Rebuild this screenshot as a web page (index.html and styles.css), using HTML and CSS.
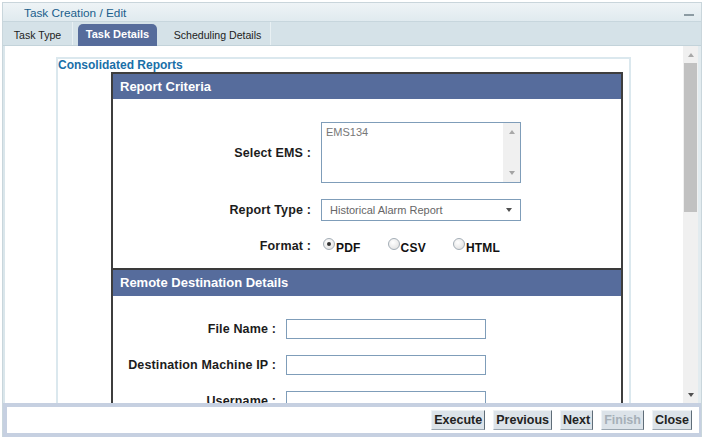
FILE: index.html
```html
<!DOCTYPE html>
<html>
<head>
<meta charset="utf-8">
<title>Task Creation / Edit</title>
<link rel="stylesheet" href="styles.css">
</head>
<body>
<div class="window">
  <div class="titlebar">
    <span class="title">Task Creation / Edit</span>
    <span class="minimize"></span>
  </div>
  <div class="tabs">
    <div class="tab tab-type">Task Type</div>
    <div class="tab tab-active">Task Details</div>
    <div class="tab tab-sched">Scheduling Details</div>
  </div>
  <div class="content">
    <div class="scroll-area">
      <div class="fieldset">
        <div class="legend">Consolidated Reports</div>
        <div class="panel">
          <div class="panel-head">Report Criteria</div>
          <div class="form form-a">
            <div class="label">Select EMS :</div>
            <div class="listbox">
              <div class="listbox-text">EMS134</div>
              <div class="listbox-bar">
                <span class="tri-up light"></span>
                <span class="tri-down light"></span>
              </div>
            </div>
            <div class="label row-gap">Report Type :</div>
            <div class="select row-gap">
              <span class="select-text">Historical Alarm Report</span>
              <span class="tri-down dark"></span>
            </div>
            <div class="label row-gap2">Format :</div>
            <div class="radios row-gap2">
              <span class="radio checked"></span><span class="radio-label">PDF</span>
              <span class="radio"></span><span class="radio-label">CSV</span>
              <span class="radio"></span><span class="radio-label">HTML</span>
            </div>
          </div>
          <div class="panel-head panel-head-sep">Remote Destination Details</div>
          <div class="form form-b">
            <div class="label">File Name :</div>
            <div class="input"></div>
            <div class="label row-gap">Destination Machine IP :</div>
            <div class="input row-gap"></div>
            <div class="label row-gap">Username :</div>
            <div class="input row-gap"></div>
          </div>
        </div>
      </div>
    </div>
    <div class="vscroll">
      <div class="vs-btn"><span class="tri-up light"></span></div>
      <div class="vs-thumb"></div>
      <div class="vs-track"></div>
      <div class="vs-btn"><span class="tri-down dark"></span></div>
    </div>
  </div>
  <div class="footer">
    <div class="footer-inner">
      <button class="btn">Execute</button>
      <button class="btn">Previous</button>
      <button class="btn">Next</button>
      <button class="btn disabled">Finish</button>
      <button class="btn">Close</button>
    </div>
  </div>
</div>
</body>
</html>
```
FILE: styles.css
```css
html, body {
  margin: 0;
  padding: 0;
}
body {
  width: 704px;
  height: 441px;
  overflow: hidden;
  background: #ffffff;
  font-family: "Liberation Sans", Arial, sans-serif;
  color: #1a1a1a;
}
.window {
  margin: 2px 2px 0 2px;
  width: 700px;
  height: 435px;
  box-sizing: border-box;
  border-top: 1px solid #c9d5db;
  border-left: 1px solid #c9d6dc;
  border-right: 1px solid #c9d6dc;
  display: flex;
  flex-direction: column;
}
.titlebar {
  height: 18px;
  flex: none;
  background: linear-gradient(#eef3f6, #e0eaef);
  display: flex;
  align-items: center;
  justify-content: space-between;
  padding: 0 7px 0 21px;
}
.title {
  font-size: 11.8px;
  color: #1a5e8c;
  line-height: 14px;
  padding-top: 1px;
}
.minimize {
  width: 10px;
  height: 2px;
  background: #8c9ba3;
  margin-top: 5px;
}
.tabs {
  height: 25px;
  flex: none;
  box-sizing: border-box;
  background: #d5e2e8;
  border-top: 1px solid #c7d6dd;
  border-bottom: 1px solid #c3d3da;
  display: flex;
  align-items: flex-end;
}
.tab {
  box-sizing: border-box;
  height: 23px;
  text-align: center;
  font-size: 10.6px;
  line-height: 14px;
  padding-top: 6px;
  color: #222;
  white-space: nowrap;
}
.tab-type {
  width: 70px;
  border-right: 1px solid #e8f0f3;
}
.tab-active {
  margin-left: 5px;
  width: 79px;
  height: 22px;
  margin-bottom: -1px;
  background: #566c9b;
  color: #ffffff;
  font-weight: bold;
  font-size: 11px;
  padding-top: 3px;
  border-radius: 5px 5px 0 0;
}
.tab-sched {
  margin-left: 8px;
  width: 106px;
  border-right: 1px solid #e8f0f3;
}
.content {
  height: 357px;
  flex: none;
  display: flex;
}
.scroll-area {
  width: 680px;
  box-sizing: border-box;
  border-left: 2px solid #dae6eb;
  overflow: hidden;
  background: #fff;
}
.fieldset {
  margin: 11px 0 0 51px;
  width: 575px;
  height: 500px;
  box-sizing: border-box;
  border: 2px solid #dbe8ee;
}
.legend {
  font-size: 12px;
  font-weight: bold;
  color: #1a6fa8;
  line-height: 13px;
}
.panel {
  margin-left: 53px;
  width: 512px;
  box-sizing: border-box;
  border: 2px solid #3e3e3e;
  border-bottom: none;
  height: 460px;
}
.panel-head {
  height: 25px;
  background: #566c9c;
  color: #fff;
  font-weight: bold;
  font-size: 13px;
  line-height: 25px;
  padding-left: 7px;
}
.panel-head-sep {
  border-top: 2px solid #3a3a3a;
  height: 26px;
  line-height: 26px;
}
.form {
  display: grid;
  column-gap: 10px;
  align-items: center;
}
.form-a {
  grid-template-columns: 198px 200px;
  padding: 23px 0 14px 0;
}
.form-b {
  grid-template-columns: 163px 200px;
  padding: 23px 0 0 0;
}
.row-gap {
  margin-top: 16px;
}
.row-gap2 {
  margin-top: 17px;
}
.label {
  text-align: right;
  font-weight: bold;
  font-size: 12.5px;
  letter-spacing: 0.15px;
  color: #1c1c1c;
  white-space: nowrap;
}
.listbox {
  height: 61px;
  box-sizing: border-box;
  border: 1px solid #7f9db9;
  display: flex;
  background: #fff;
}
.listbox-text {
  flex: 1;
  font-size: 11px;
  line-height: 13px;
  color: #777;
  padding: 3px 0 0 4px;
}
.listbox-bar {
  width: 17px;
  background: #f0f0f0;
  display: flex;
  flex-direction: column;
  justify-content: space-between;
  align-items: center;
  padding: 7px 0 7px 0;
  box-sizing: border-box;
}
.tri-up {
  width: 0;
  height: 0;
  border-left: 3.5px solid transparent;
  border-right: 3.5px solid transparent;
  border-bottom: 4px solid #a3a3a3;
}
.tri-down {
  width: 0;
  height: 0;
  border-left: 3.5px solid transparent;
  border-right: 3.5px solid transparent;
  border-top: 4px solid #a3a3a3;
}
.tri-down.dark {
  border-top-color: #505050;
}
.tri-up.light {
  border-bottom-color: #a8a8a8;
}
.select {
  height: 22px;
  box-sizing: border-box;
  border: 1px solid #7f9db9;
  display: flex;
  align-items: center;
  justify-content: space-between;
  padding: 0 8px 0 8px;
}
.select-text {
  font-size: 11px;
  color: #666;
}
.radios {
  display: flex;
  align-items: center;
  height: 16px;
}
.radio {
  width: 12px;
  height: 12px;
  flex: none;
  box-sizing: border-box;
  border-radius: 50%;
  border: 1px solid #a3adb6;
  background: radial-gradient(circle at 40% 35%, #ffffff, #dcdcdc);
  margin: -4px 1px 0 2px;
  position: relative;
}
.radio.checked::after {
  content: "";
  position: absolute;
  left: 3px;
  top: 3px;
  width: 4px;
  height: 4px;
  border-radius: 50%;
  background: #333;
}
.radio-label {
  font-weight: bold;
  font-size: 12px;
  letter-spacing: 0.2px;
  color: #111;
  margin-right: 25px;
  padding-top: 3px;
}
.input {
  height: 20px;
  box-sizing: border-box;
  border: 1px solid #7f9db9;
  background: #fff;
}
.vscroll {
  width: 18px;
  box-sizing: border-box;
  border-right: 3px solid #e2ebef;
  background: #f0f0f0;
  display: flex;
  flex-direction: column;
}
.vs-btn {
  height: 17px;
  flex: none;
  display: flex;
  align-items: center;
  justify-content: center;
}
.vs-thumb {
  height: 149px;
  flex: none;
  margin: 0 1px;
  background: #c1c1c1;
}
.vs-track {
  flex: 1;
}
.footer {
  height: 34px;
  flex: none;
  box-sizing: border-box;
  background: #c6d0e1;
  padding: 4px 2px 4px 4px;
}
.footer-inner {
  height: 26px;
  background: #fff;
  display: flex;
  align-items: center;
  justify-content: flex-end;
  padding-right: 7px;
  gap: 8px;
}
.btn {
  height: 20px;
  box-sizing: border-box;
  padding: 0 2px;
  margin: 0;
  font-family: "Liberation Sans", Arial, sans-serif;
  font-weight: bold;
  font-size: 12.5px;
  color: #222;
  background: #dce3e9;
  border: 1px solid #eef2f5;
  border-right-color: #5f6d78;
  border-bottom-color: #9aa6b0;
  border-radius: 0;
}
.btn.disabled {
  color: #a6b0b8;
}
```
